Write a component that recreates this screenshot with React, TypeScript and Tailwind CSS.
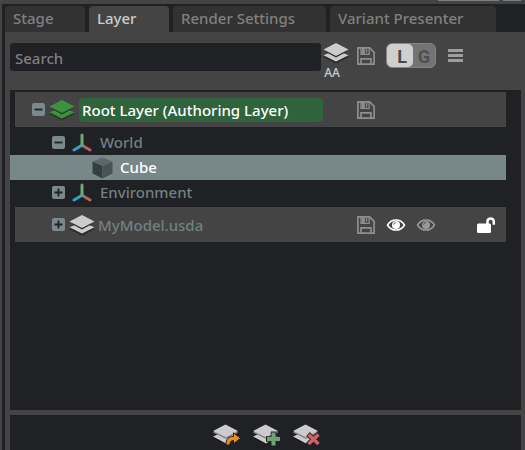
import { useState, type ReactNode } from 'react';

type Tone = 'light' | 'green';

function LayersIcon({ tone = 'light', className = 'h-6 w-7' }: { tone?: Tone; className?: string }) {
  const fill = tone === 'green' ? '#3f9142' : '#cccccc';
  const shade = tone === 'green' ? '#2b3a2c' : '#2c2c2c';
  return (
    <svg viewBox="0 0 28 24" className={className} aria-hidden="true">
      <path d="M1 16 14 22.8 27 16 21 13.5 7 13.5Z" fill={shade} />
      <path d="M1.5 14.2 7 12 14 15 21 12 26.5 14.2 14 20.6Z" fill={fill} />
      <path d="M3 10.5 14 16.6 25 10.5Z" fill={shade} />
      <path d="M14 2 26.5 8.5 14 15 1.5 8.5Z" fill={fill} />
    </svg>
  );
}

function SheetsIcon() {
  return (
    <svg viewBox="0 0 28 24" className="h-6 w-7" aria-hidden="true">
      <path d="M2 15 14 22 26 15 14 9Z" fill="#171819" />
      <path d="M1 13.5 8 10.5H20L26 13.5 14 20.5Z" fill="#cccccc" />
      <path d="M1 9.5 14 16 26 9.5 24.5 8.5H2.5Z" fill="#85878a" />
      <path d="M13.5 1.5 26 8 14 14.2 1 8Z" fill="#cccccc" />
    </svg>
  );
}

function SaveIcon() {
  return (
    <svg viewBox="0 0 20 20" className="h-5 w-5" fill="none" stroke="#8e8e8e" strokeWidth="1.7" aria-hidden="true">
      <path d="M1.9 1.9H13.7L18.1 6.3V18.1H1.9Z" />
      <path d="M5 2V8.3H13.2V2" strokeWidth="1.3" />
      <path d="M5 18V12.8H15V18" />
      <path d="M5.5 2H8.8V8H5.5Z" fill="#8e8e8e" stroke="none" />
      <path d="M10.5 3V6.6" strokeWidth="1.4" />
    </svg>
  );
}

function EyeIcon({ color }: { color: string }) {
  return (
    <svg viewBox="0 0 20 16" className="h-4 w-5" fill="none" aria-hidden="true">
      <path d="M1.5 8C5.5 1.2 14.5 1.2 18.5 8C14.5 14.8 5.5 14.8 1.5 8Z" stroke={color} strokeWidth="1.5" />
      <circle cx="10" cy="8" r="4" fill={color} />
      <path d="M7.6 7.6C7.8 6.3 8.6 5.6 9.8 5.6" stroke="#444" strokeWidth="1" />
    </svg>
  );
}

function UnlockIcon() {
  return (
    <svg viewBox="0 0 20 18" className="h-[18px] w-5" aria-hidden="true">
      <rect x="1" y="7.5" width="14" height="9.5" rx="1.5" fill="#fff" />
      <path d="M11.5 9V5.2A3.2 3.2 0 0 1 17.8 5.2V8.7" fill="none" stroke="#fff" strokeWidth="2.5" />
    </svg>
  );
}

function AxisIcon() {
  return (
    <svg viewBox="0 0 20 20" className="h-5 w-5" strokeWidth="3" strokeLinecap="round" aria-hidden="true">
      <path d="M10 12.3 18 17" stroke="#b56464" />
      <path d="M10 12.3 2 17" stroke="#2fa5c5" />
      <path d="M10 2V11.5" stroke="#74a674" />
    </svg>
  );
}

function CubeIcon() {
  return (
    <svg viewBox="0 0 22 22" className="h-[22px] w-[22px]" aria-hidden="true">
      <path d="M10.5 .5 20.5 4.5 10.5 9 .5 4.5Z" fill="#5d686a" />
      <path d="M.5 4.5 10.5 9V21.5L.5 16.5Z" fill="#324044" />
      <path d="M20.5 4.5 10.5 9V21.5L20.5 16.5Z" fill="#475356" />
    </svg>
  );
}

function Expander({ open, label }: { open: boolean; label: string }) {
  return (
    <button type="button" aria-label={label} aria-expanded={open} className="h-[13px] w-[13px] shrink-0">
      <svg viewBox="0 0 13 13" className="h-[13px] w-[13px]" aria-hidden="true">
        <rect width="13" height="13" rx="2" fill="#7a898b" />
        <path d={open ? 'M2.5 6.5H10.5' : 'M2.5 6.5H10.5M6.5 2.5V10.5'} stroke="#202124" strokeWidth="1.8" />
      </svg>
    </button>
  );
}

function IconCell({ label, children }: { label: string; children: ReactNode }) {
  return (
    <button type="button" aria-label={label} className="flex h-full w-[30px] shrink-0 items-center justify-center">
      {children}
    </button>
  );
}

const tabs = [
  { name: 'Stage', width: 'w-20' },
  { name: 'Layer', width: 'w-20' },
  { name: 'Render Settings', width: 'w-[153px]' },
  { name: 'Variant Presenter', width: 'w-[166px]' },
];

function EditButton({ label, children }: { label: string; children: ReactNode }) {
  return (
    <button type="button" aria-label={label} className="relative h-6 w-7">
      <SheetsIcon />
      <svg viewBox="0 0 16 14" className="absolute top-[9px] left-[13px] h-[14px] w-4 overflow-visible" aria-hidden="true">
        {children}
      </svg>
    </button>
  );
}

export default function App() {
  const [tab, setTab] = useState('Layer');
  const [mode, setMode] = useState('L');

  return (
    <div className="flex h-screen flex-col overflow-hidden bg-[#444] font-['Noto_Sans',sans-serif] text-[15px] leading-5 font-medium">
      <div className="flex h-1 shrink-0 justify-end gap-1 pr-1">
        <div className="h-px w-[61px] bg-[#7a7f80]" />
        <div className="h-px w-[18px] bg-[#7a7f80]" />
      </div>
      <div className="ml-0.5 flex min-h-0 flex-1 flex-col border-t-2 border-l-[3px] border-[#202124]">
        <div role="tablist" className="flex h-[26px] shrink-0 gap-1 bg-[#202124]">
          {tabs.map(({ name, width }) => (
            <button
              key={name}
              type="button"
              role="tab"
              aria-selected={tab === name}
              onClick={() => setTab(name)}
              className={`${width} shrink-0 rounded-t-[4px] px-2 pb-0.5 text-left whitespace-nowrap ${
                tab === name ? 'bg-[#444] text-[#cccccc]' : 'bg-[#323232] text-[#808080]'
              }`}
            >
              {name}
            </button>
          ))}
        </div>

        <div className="flex h-[58px] shrink-0 items-start pt-[11px] pr-[62px] pl-[5px]">
          <input
            type="text"
            aria-label="Search"
            placeholder="Search"
            className="h-7 min-w-0 flex-1 rounded-[3px] bg-[#202124] px-[5px] pt-0.5 text-[#ccc] outline-none placeholder:text-[#808080] placeholder:opacity-100"
          />
          <button type="button" aria-label="Auto authoring" className="flex w-[30px] flex-col items-center text-[#cccccc]">
            <LayersIcon className="-mt-0.5 h-6 w-7" />
            <span className="-ml-2 text-xs leading-4">AA</span>
          </button>
          <button type="button" aria-label="Save all layers" className="mt-[3px] flex w-[30px] justify-center">
            <SaveIcon />
          </button>
          <div role="group" aria-label="Local or global mode" className="ml-[5px] flex h-[25px] w-[50px] rounded-[6px] border border-[#858585] bg-[#747474]">
            {['L', 'G'].map((m) => (
              <button
                key={m}
                type="button"
                aria-pressed={mode === m}
                onClick={() => setMode(m)}
                className={`flex-1 rounded-[5px] pt-0.5 font-['Roboto',sans-serif] text-lg leading-5 font-bold ${
                  mode === m ? 'bg-[#cfcfcf] pl-1 text-[#454a4c]' : 'text-[#4b5052]'
                }`}
              >
                {m}
              </button>
            ))}
          </div>
          <button type="button" aria-label="Options" className="mt-1.5 ml-3 flex h-[13px] w-[15px] flex-col justify-between">
            <span className="h-[3px] w-full bg-[#9e9e9e]" />
            <span className="h-[3px] w-full bg-[#9e9e9e]" />
            <span className="h-[3px] w-full bg-[#9e9e9e]" />
          </button>
        </div>

        <div role="tree" aria-label="Layers" className="mr-1 ml-[5px] min-h-0 flex-1 bg-[#202124] pt-0.5 pr-[15px] text-[#738082]">
          <div role="treeitem" className="ml-[5px] flex h-[35px] items-center bg-[#444] pl-[17px]">
            <Expander open label="Collapse Root Layer" />
            <span className="ml-[3px]">
              <LayersIcon tone="green" />
            </span>
            <span className="ml-[3px] h-6 w-[244px] rounded-[4px] bg-[#2f633c] px-[3px] leading-6 whitespace-nowrap text-white">
              Root Layer (Authoring Layer)
            </span>
            <span className="ml-auto flex h-full pr-[125px]">
              <IconCell label="Save Root Layer"><SaveIcon /></IconCell>
            </span>
          </div>
          <div role="treeitem" className="mt-[3px] flex h-[25px] items-center pl-[42px]">
            <Expander open label="Collapse World" />
            <span className="ml-[7px]"><AxisIcon /></span>
            <span className="ml-2 pb-0.5">World</span>
          </div>
          <div role="treeitem" aria-selected="true" className="flex h-[25px] items-center bg-[#788889] pl-[82px] text-white">
            <CubeIcon />
            <span className="ml-1.5 pb-0.5">Cube</span>
          </div>
          <div role="treeitem" className="flex h-[25px] items-center pl-[42px]">
            <Expander open={false} label="Expand Environment" />
            <span className="ml-[7px]"><AxisIcon /></span>
            <span className="ml-2 pb-0.5">Environment</span>
          </div>
          <div role="treeitem" className="mt-0.5 ml-[5px] flex h-[35px] items-center bg-[#444] pl-[37px]">
            <Expander open={false} label="Expand MyModel.usda" />
            <span className="ml-[3px]"><LayersIcon /></span>
            <span className="ml-0.5">MyModel.usda</span>
            <span className="ml-auto flex h-full pr-[5px]">
              <IconCell label="Save MyModel.usda"><SaveIcon /></IconCell>
              <IconCell label="Local visibility"><EyeIcon color="#ffffff" /></IconCell>
              <IconCell label="Global visibility"><EyeIcon color="#9a9a9a" /></IconCell>
              <span className="w-[30px]" />
              <IconCell label="Lock layer"><UnlockIcon /></IconCell>
            </span>
          </div>
        </div>

        <div className="mt-[5px] mr-1 ml-[5px] flex h-[35px] shrink-0 items-center justify-center gap-3 bg-[#202124] pt-1">
          <EditButton label="Insert layer">
            <path d="M1 13C1 6.5 3.5 4.5 8.5 4.5V.8L15.5 6.3 8.5 11.8V8.6C5.8 8.6 5 10 4.8 13Z" fill="#e8901c" stroke="#202124" strokeWidth="1" />
          </EditButton>
          <EditButton label="Create layer">
            <path d="M8.5 -.5V14.5M1 7H16" stroke="#202124" strokeWidth="5.6" />
            <path d="M8.5 .5V13.5M2 7H15" stroke="#6fa174" strokeWidth="4" />
          </EditButton>
          <EditButton label="Remove layer">
            <path d="M3 2 14 12.5M14 2 3 12.5" stroke="#202124" strokeWidth="5.2" />
            <path d="M3.5 2.5 13.5 12M13.5 2.5 3.5 12" stroke="#cb6464" strokeWidth="3.6" />
          </EditButton>
        </div>
      </div>
    </div>
  );
}
